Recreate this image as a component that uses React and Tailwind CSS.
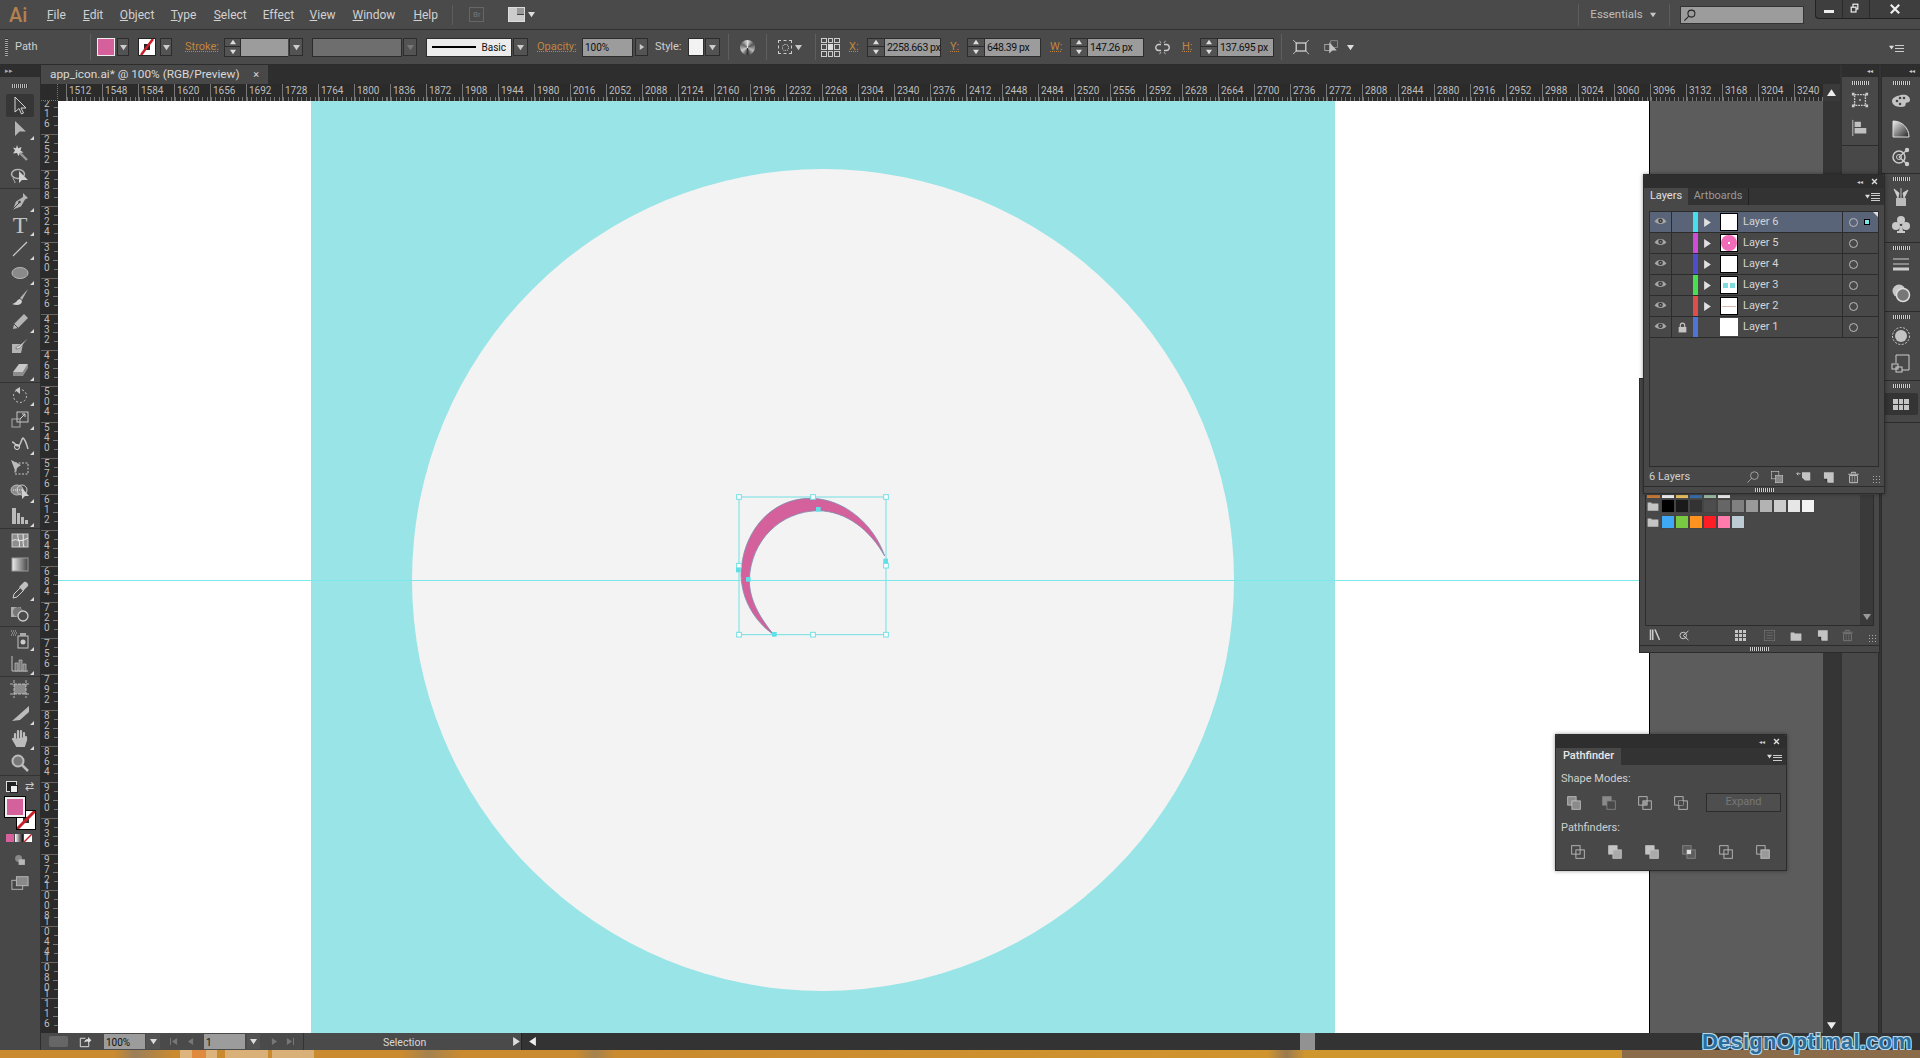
import React from 'react';

const GRAY = '#b4b4b4';
const FONT = 'font-[Roboto,"Liberation_Sans",sans-serif]';

const Caret = ({ color = '#c8c8c8', dir = 'down', size = 7 }) => {
    const d = { down: 'M0 1h8L4 7z', up: 'M0 7h8L4 1z', right: 'M1 0v8l6-4z', left: 'M7 0v8L1 4z' }[dir];
    return <svg width={size} height={size} viewBox="0 0 8 8"><path d={d} fill={color} /></svg>;
};

const Svg = ({ size = 20, children, box = '0 0 20 20' }) => (
    <svg width={size} height={size} viewBox={box} fill="none">{children}</svg>
);

// ── Tool icons ────────────────────────────────────────────────────────────────
const toolIcons = {
    select: <path d="M5 1v15l4-3.5 2.5 5.5 2-1-2.5-5h5z" fill="#3a3a3a" stroke="#d4d4d4" />,
    direct: <path d="M5 2v15l4.5-4.5H16z" fill={GRAY} />,
    wand: <><path d="M7 2l1.2 3.2L11.5 4l-1 3.5 3 2-3.5.5L8.5 13 7 10l-4 .5 2-3-2-3 3 .7z" fill="#d0d0d0" /><path d="M10 10l7 7" stroke="#999" strokeWidth="2.4" /></>,
    lasso: <><ellipse cx="8" cy="8" rx="6.5" ry="4.5" stroke={GRAY} strokeWidth="1.5" /><path d="M3 12c0 2 2 2 2 5" stroke={GRAY} /><path d="M9 5v12l3-3h6z" fill="#d0d0d0" /></>,
    pen: <><path d="M13 2l5 5-3 1.500-4 7-8 3 3-8 7-4.500z" fill={GRAY} /><path d="M3 18l6-6" stroke="#444" /><circle cx="9.500" cy="11" r="1.300" fill="#444" /></>,
    line: <path d="M3 17L17 3" stroke="#c8c8c8" strokeWidth="1.200" />,
    ellipse: <ellipse cx="10" cy="10" rx="8" ry="5.500" fill="#8a8a8a" stroke="#b8b8b8" />,
    brush: <><path d="M18 1l-8 9 2 2z" fill={GRAY} /><path d="M10 11c-3 0-3 4-8 5 5 2 10 1 10-3z" fill="#d0d0d0" /></>,
    pencil: <><path d="M14 2l4 4-10 10-5 1 1-5z" fill={GRAY} /><path d="M4 12l4 4" stroke="#444" /></>,
    blob: <><path d="M2 8h11l-2 9H2z" fill={GRAY} /><path d="M18 2L9 10c-2 0-3 1-3 3 3 0 4-1 5-2z" fill="#d8d8d8" stroke="#444" strokeWidth=".5" /></>,
    eraser: <><path d="M9 4h9l-5 8H3z" fill="#c8c8c8" /><path d="M3 12h10v4H3zM13 12l5-8v4l-5 8z" fill="#8c8c8c" /></>,
    rotate: <><circle cx="10" cy="11" r="6.500" stroke="#c0c0c0" strokeDasharray="2 2" /><path d="M10 2v7L5 5z" fill="#c8c8c8" /></>,
    scale: <><rect x="2" y="10" width="8" height="8" stroke="#aaa" /><rect x="7" y="3" width="11" height="10" stroke="#c4c4c4" /><path d="M10 10l5-5M12 5h3v3" stroke="#d4d4d4" /></>,
    warp: <><path d="M2 9c3 0 3 4 6 4s3-7 5-8c2 1 3 4 5 11" stroke="#c4c4c4" strokeWidth="1.500" /><circle cx="7" cy="14" r="2.500" stroke="#e0e0e0" /></>,
    free: <><rect x="5" y="5" width="13" height="11" stroke="#c8c8c8" strokeDasharray="2 1.500" /><path d="M1 2l10 5-4 3-1 5z" fill="#bcbcbc" /></>,
    shape: <><ellipse cx="7" cy="8" rx="6" ry="5" fill="#8a8a8a" stroke="#bbb" /><ellipse cx="12" cy="8" rx="5" ry="5" stroke="#ccc" /><path d="M3 8h9" stroke="#eee" strokeDasharray="1 1" /><path d="M12 6v11l3-3h4z" fill="#d0d0d0" /></>,
    grid: <><path d="M2 2h4v16H2zM7 7h3v11H7zM11 11h3v7h-3zM15 14h3v4h-3z" fill="#bbb" /></>,
    mesh: <><rect x="2" y="3" width="16" height="13" fill="#8e8e8e" stroke="#ccc" /><path d="M2 10c5-4 6 3 16-3M8 3c-1 5 3 8 1 13M13 3c1 4-1 9 1 13" stroke="#eee" /></>,
    gradient: <><defs><linearGradient id="tg"><stop offset="0" stopColor="#eee" /><stop offset="1" stopColor="#444" /></linearGradient></defs><rect x="2" y="3" width="16" height="13" fill="url(#tg)" stroke="#999" /></>,
    dropper: <><path d="M3 18l1-4 7-7 3 3-7 7z" stroke="#d0d0d0" /><path d="M10 6l4-4c2-1 5 2 4 4l-4 4-1 1-4-4z" fill="#c0c0c0" /></>,
    blend: <><rect x="1" y="3" width="10" height="10" fill="#aaa" /><circle cx="8" cy="8" r="5" fill="#777" /><circle cx="13" cy="12" r="5" fill="#4a4a4a" stroke="#ccc" strokeWidth="1.300" /></>,
    symbol: <><rect x="8" y="7" width="10" height="12" stroke="#c4c4c4" /><rect x="10" y="4" width="6" height="3" fill="#aaa" /><circle cx="13" cy="13" r="2.500" fill="#ccc" /><path d="M1 2h6M2 4h5M1 6h6" stroke="#bbb" strokeDasharray="1 1" /></>,
    graph: <><path d="M2 2v15h16" stroke="#c0c0c0" /><path d="M5 9h3v8H5zM9 6h3v11H9zM13 10h3v7h-3z" fill="#777" stroke="#c0c0c0" strokeWidth=".7" /></>,
    artboard: <><rect x="4" y="5" width="12" height="10" fill="#8a8a8a" /><path d="M4 1v18M16 1v18M0 5h20M0 15h20" stroke="#d0d0d0" strokeDasharray="3 1" strokeWidth=".8" /></>,
    slice: <path d="M19 2L2 17l8-1 9-8z" fill="#bcbcbc" />,
    hand: <path d="M5 12V6M8 10V3M11 10V3M14 10V5M3 11l4 7h7l2-6V9" stroke="#bcbcbc" strokeWidth="2.200" strokeLinecap="round" fill="#bcbcbc" />,
    zoom: <><circle cx="8" cy="8" r="5.500" fill="#777" stroke="#bcbcbc" strokeWidth="2" /><path d="M12 12l6 6" stroke="#bcbcbc" strokeWidth="2.500" /></>,
};

const ToolGroup = ({ h, items }) => (
    <div className={`${h} flex flex-col border-b border-[#343434]`}>
        {items.map(([name, corner]) => (
            <div key={name} className="relative flex-1 flex items-center justify-center">
                {name === 'type'
                    ? <span className="font-['Liberation_Serif',serif] text-[24px] leading-none text-[#c4c4c4]">T</span>
                    : <Svg>{toolIcons[name]}</Svg>}
                {corner && <span className="absolute right-[6px] bottom-[1px] w-0 h-0 border-l-[4px] border-l-transparent border-b-[4px] border-b-[#d8d8d8]" />}
            </div>
        ))}
    </div>
);

const Toolbar = () => (
    <div className="w-[41px] shrink-0 flex flex-col bg-[#484848] border-r border-[#2c2c2c]">
        <div className="h-[12px] bg-[#2e2e2e] flex items-center pl-[5px]">
            <span className="text-[7px] leading-none text-[#aaa]">▸▸</span>
        </div>
        <div className="h-[17px] flex items-center justify-center">
            <span className="w-[16px] h-[4px] bg-[repeating-linear-gradient(90deg,#bbb_0_1px,#333_1px_2px)]" />
        </div>
        <div className="mx-[6px] h-[23px] bg-[#363636] rounded-[2px] flex items-center justify-center">
            <Svg>{toolIcons.select}</Svg>
        </div>
        <ToolGroup h="h-[72px]" items={[['direct', 1], ['wand'], ['lasso']]} />
        <ToolGroup h="h-[194px]" items={[['pen', 1], ['type', 1], ['line', 1], ['ellipse', 1], ['brush'], ['pencil', 1], ['blob'], ['eraser', 1]]} />
        <ToolGroup h="h-[146px]" items={[['rotate', 1], ['scale', 1], ['warp', 1], ['free'], ['shape', 1], ['grid', 1]]} />
        <ToolGroup h="h-[98px]" items={[['mesh'], ['gradient'], ['dropper', 1], ['blend']]} />
        <ToolGroup h="h-[50px]" items={[['symbol', 1], ['graph', 1]]} />
        <ToolGroup h="h-[99px]" items={[['artboard'], ['slice', 1], ['hand', 1], ['zoom']]} />
        <div className="mt-[3px] h-[14px] flex items-center justify-between px-[6px]">
            <span className="relative w-[11px] h-[11px] bg-[#222] border border-[#ddd]"><span className="absolute left-[3px] top-[3px] w-[8px] h-[8px] bg-[#eee] border border-[#222]" /></span>
            <span className="text-[11px] leading-none text-[#ccc]">⇄</span>
        </div>
        <div className="relative mt-[4px] h-[34px] mx-[5px]">
            <span className="absolute left-[11px] top-[13px] w-[20px] h-[20px] bg-white border border-black overflow-hidden">
                <svg width="18" height="18" viewBox="0 0 18 18"><rect x="6" y="6" width="6" height="6" fill="#333" /><path d="M0 18L18 0" stroke="#c8202a" strokeWidth="3" /></svg>
            </span>
            <span className="absolute left-0 top-0 w-[20px] h-[20px] bg-[#d5619c] border-2 border-[#eee] outline outline-black" />
        </div>
        <div className="mt-[3px] ml-[6px] flex gap-px">
            <span className="w-[8px] h-[8px] bg-[#d5619c]" />
            <span className="w-[8px] h-[8px] bg-[linear-gradient(90deg,#fff,#111)]" />
            <span className="w-[8px] h-[8px] bg-white overflow-hidden"><svg width="8" height="8" viewBox="0 0 8 8"><path d="M0 8L8 0" stroke="#c8202a" strokeWidth="1.500" /></svg></span>
        </div>
        <div className="mt-[11px] flex justify-center">
            <Svg size={14}><circle cx="8" cy="8" r="5" fill="#888" /><rect x="8" y="9" width="9" height="8" fill="#b8b8b8" /></Svg>
        </div>
        <div className="mt-[7px] flex justify-center">
            <Svg size={18}><rect x="1" y="7" width="12" height="10" stroke="#bbb" /><rect x="6" y="3" width="13" height="10" fill="#8a8a8a" stroke="#bbb" /></Svg>
        </div>
    </div>
);

// ── Menu bar ──────────────────────────────────────────────────────────────────
const menus = [
    ['', 'F', 'ile', 'w-[36px]'], ['', 'E', 'dit', 'w-[37px]'], ['', 'O', 'bject', 'w-[51px]'], ['', 'T', 'ype', 'w-[43px]'],
    ['', 'S', 'elect', 'w-[49px]'], ['Effe', 'c', 't', 'w-[47px]'], ['', 'V', 'iew', 'w-[43px]'], ['', 'W', 'indow', 'w-[61px]'], ['', 'H', 'elp', 'w-[39px]'],
];

const MenuBar = () => (
    <div className="h-[30px] shrink-0 flex items-center bg-[#4a4a4a] border-b border-[#2f2f2f] text-[12px] text-[#d2d2d2]">
        <span className="ml-[9px] w-[38px] text-[20px] font-medium text-[#b5814f] leading-none">Ai</span>
        {menus.map(([pre, u, post, w]) => (
            <span key={u} className={w}>{pre}<span className="underline">{u}</span>{post}</span>
        ))}
        <span className="w-px h-[20px] bg-[#5c5c5c]" />
        <span className="ml-[16px] w-[15px] h-[15px] border border-[#666] text-[8px] leading-[13px] text-center text-[#777]">Br</span>
        <span className="ml-[24px] w-[17px] h-[15px] bg-[#444] border border-[#ddd] flex">
            <span className="w-[8px] bg-[#ccc]" />
            <span className="flex-1 flex flex-col gap-px"><span className="flex-1 bg-[#999]" /><span className="flex-1 bg-[#ccc]" /></span>
        </span>
        <span className="ml-[3px]"><Caret color="#ddd" /></span>
        <span className="ml-[1043px] w-px h-[22px] bg-[#5c5c5c]" />
        <span className="ml-[11px] w-[50px] text-[11.5px] text-[#bdbdbd]">Essentials</span>
        <span className="ml-[10px]"><Caret size={6} /></span>
        <span className="ml-[13px] w-px h-[22px] bg-[#5c5c5c]" />
        <span className="ml-[10px] w-[124px] h-[18px] bg-[#9c9c9c] border border-[#333] flex items-center pl-[2px]">
            <Svg size={14}><circle cx="12" cy="8" r="5" stroke="#222" strokeWidth="1.500" /><path d="M8 12l-6 6" stroke="#222" strokeWidth="1.500" /></Svg>
        </span>
        <div className="ml-[11px] self-start w-[105px] h-[19px] flex bg-[#3e3e3e] border-l border-b border-[#222] rounded-bl-[4px]">
            <span className="w-[27px] flex items-center justify-center border-r border-[#2a2a2a]"><span className="mt-[5px] w-[10px] h-[3px] bg-[#eee]" /></span>
            <span className="w-[27px] flex items-center justify-center border-r border-[#2a2a2a]"><Svg size={12}><rect x="5" y="2" width="8" height="8" stroke="#eee" strokeWidth="2" /><rect x="2" y="7" width="8" height="8" fill="#3e3e3e" stroke="#eee" strokeWidth="2" /></Svg></span>
            <span className="flex-1 flex items-center justify-center"><Svg size={12}><path d="M3 3l14 14M17 3L3 17" stroke="#eee" strokeWidth="3.500" /></Svg></span>
        </div>
    </div>
);

// ── Control bar ───────────────────────────────────────────────────────────────
const Drop = ({ w, ml = '', dim }) => (
    <span className={`${w} ${ml} h-[18px] shrink-0 flex items-center justify-center bg-[#535353] border border-[#2c2c2c]`}>
        <Caret color={dim ? '#777' : '#ccc'} />
    </span>
);

const Sep = ({ ml }) => <span className={`${ml} w-px h-[26px] bg-[#5e5e5e] shrink-0`} />;

const Spinner = ({ ml, w = 'w-[18px]' }) => (
    <span className={`${ml} ${w} h-[19px] shrink-0 flex flex-col items-center justify-around bg-[#535353] border border-[#2c2c2c]`}>
        <Caret dir="up" size={6} color="#ddd" />
        <span className="w-full h-px bg-[#2c2c2c]" />
        <Caret size={6} color="#ddd" />
    </span>
);

const Value = ({ v }) => (
    <span className="w-[56px] h-[19px] shrink-0 bg-[#9c9c9c] border border-[#2c2c2c] border-l-0 pl-[2px] text-[10.5px] leading-[17px] text-[#111] tracking-[-0.4px] whitespace-nowrap">{v}</span>
);

const Label = ({ w, ml, children }) => (
    <span className={`${w} ${ml} shrink-0 text-[#c2853f] underline decoration-dotted text-[11px]`}>{children}</span>
);

const ControlBar = () => (
    <div className="h-[35px] shrink-0 flex items-center bg-[#4a4a4a] border-b border-[#2c2c2c] text-[11px] text-[#cfcfcf]">
        <span className="ml-[5px] w-[3px] h-[18px] bg-[repeating-linear-gradient(0deg,#aaa_0_1px,#333_1px_2px)] shrink-0" />
        <span className="ml-[7px] w-[19px] shrink-0">Path</span>
        <Sep ml="ml-[56px]" />
        <span className="ml-[6px] w-[18px] h-[18px] shrink-0 bg-[#d5619c] border border-[#eee]" />
        <Drop w="w-[12px]" ml="ml-[2px]" />
        <span className="ml-[9px] w-[18px] h-[18px] shrink-0 bg-white border border-[#222] overflow-hidden">
            <svg width="16" height="16" viewBox="0 0 16 16"><rect x="5" y="5" width="6" height="6" fill="#222" /><path d="M2 16L14 0" stroke="#c8202a" strokeWidth="2.500" /></svg>
        </span>
        <Drop w="w-[12px]" ml="ml-[4px]" />
        <Label w="w-[31px]" ml="ml-[13px]">Stroke:</Label>
        <Spinner ml="ml-[8px]" w="w-[17px]" />
        <span className="w-[47px] h-[19px] shrink-0 bg-[#9c9c9c] border-y border-[#2c2c2c]" />
        <Drop w="w-[14px]" ml="ml-px" />
        <span className="ml-[9px] w-[90px] h-[19px] shrink-0 bg-[#6e6e6e] border border-[#2c2c2c]" />
        <Drop w="w-[14px]" ml="ml-px" dim />
        <span className="ml-[9px] w-[86px] h-[19px] shrink-0 bg-[#ececec] border border-[#2c2c2c] flex items-center px-[5px] text-[#111] text-[10px]">
            <span className="w-[45px] h-[2px] bg-black mr-[6px]" />Basic
        </span>
        <Drop w="w-[15px]" ml="ml-px" />
        <Label w="w-[37px]" ml="ml-[9px]">Opacity:</Label>
        <span className="ml-[8px] w-[51px] h-[19px] shrink-0 bg-[#9c9c9c] border border-[#2c2c2c] pl-[2px] text-[10px] leading-[17px] text-[#111]">100%</span>
        <span className="ml-[2px] w-[13px] h-[18px] shrink-0 flex items-center justify-center bg-[#535353] border border-[#2c2c2c]"><Caret dir="right" size={6} /></span>
        <span className="ml-[7px] w-[24px] shrink-0">Style:</span>
        <span className="ml-[9px] w-[16px] h-[18px] shrink-0 bg-[#f2f2f2] border border-[#2c2c2c]" />
        <Drop w="w-[15px]" ml="ml-px" />
        <Sep ml="ml-[8px]" />
        <span className="ml-[11px] w-[15px] h-[15px] shrink-0 rounded-full bg-[conic-gradient(#ddd,#555,#bbb,#333,#ccc,#666,#ddd)]" />
        <Sep ml="ml-[11px]" />
        <span className="ml-[11px] w-[14px] h-[14px] shrink-0 border border-dashed border-[#ccc] flex items-center justify-center"><span className="w-[7px] h-[7px] rounded-full border border-dotted border-[#ccc]" /></span>
        <span className="ml-[3px] shrink-0"><Caret /></span>
        <Sep ml="ml-[13px]" />
        <span className="ml-[5px] w-[19px] h-[19px] shrink-0 grid grid-cols-3 gap-px">
            {[0, 1, 2, 3, 4, 5, 6, 7, 8].map((i) => <span key={i} className={i === 4 ? 'bg-[#ddd]' : 'border border-[#ccc]'} />)}
        </span>
        <Label w="w-[11px]" ml="ml-[9px]">X:</Label>
        <Spinner ml="ml-[7px]" />
        <Value v="2258.663 px" />
        <Label w="w-[10px]" ml="ml-[9px]">Y:</Label>
        <Spinner ml="ml-[7px]" />
        <Value v="648.39 px" />
        <Label w="w-[13px]" ml="ml-[9px]">W:</Label>
        <Spinner ml="ml-[7px]" />
        <Value v="147.26 px" />
        <span className="ml-[11px] w-[15px] shrink-0 flex">
            <Svg size={15}><path d="M8 6H5a4 4 0 000 8h3M12 6h3a4 4 0 010 8h-3" stroke="#ccc" strokeWidth="1.800" /><path d="M6 1l2 3M14 1l-2 3M6 19l2-3M14 19l-2-3" stroke="#ccc" /></Svg>
        </span>
        <Label w="w-[10px]" ml="ml-[12px]">H:</Label>
        <Spinner ml="ml-[8px]" />
        <Value v="137.695 px" />
        <Sep ml="ml-[7px]" />
        <span className="ml-[11px] w-[16px] shrink-0 flex">
            <Svg size={16}><rect x="4" y="5" width="12" height="10" stroke="#ddd" strokeWidth="1.500" /><path d="M0 1l4 4M20 1l-4 4M0 19l4-4M20 19l-4-4" stroke="#ddd" /></Svg>
        </span>
        <span className="ml-[15px] w-[15px] shrink-0 flex">
            <Svg size={15}><rect x="1" y="6" width="8" height="8" stroke="#bbb" /><rect x="9" y="1" width="9" height="9" stroke="#999" /><path d="M7 3v15l4-4h6z" fill="#c4c4c4" /></Svg>
        </span>
        <span className="ml-[8px] shrink-0"><Caret color="#ddd" /></span>
        <span className="ml-auto mr-[16px] shrink-0 flex items-center gap-px">
            <Caret size={5} color="#ddd" />
            <span className="w-[9px] h-[9px] bg-[repeating-linear-gradient(0deg,#ccc_0_1px,transparent_1px_3px)]" />
        </span>
    </div>
);

// ── Rulers ────────────────────────────────────────────────────────────────────
const hMarks = [];
for (let n = 1512; n <= 3240; n += 36) hMarks.push(n);
const vMarks = [];
for (let n = 216; n <= 1116; n += 36) vMarks.push(n);

const HRuler = () => (
    <div className="h-[17px] shrink-0 flex bg-[#2b2b2b] text-[10px] text-[#bdbdbd]">
        <span className="w-[17px] shrink-0 border-r border-b border-dotted border-[#777]" />
        <div className="flex-1 flex pl-[8px] overflow-hidden">
            {hMarks.map((n) => (
                <div key={n} className="relative w-[36px] shrink-0 border-l border-[#777] pl-[2px] leading-[13px] overflow-visible">
                    {n}
                    <span className="absolute left-0 right-0 bottom-0 h-[4px] bg-[repeating-linear-gradient(90deg,#777_0_1px,transparent_1px_4.500px)]" />
                </div>
            ))}
        </div>
        <div className="w-[17px] shrink-0 bg-[#3a3a3a] flex items-center justify-center"><Caret dir="up" color="#eee" size={9} /></div>
    </div>
);

const VRuler = () => (
    <div className="w-[17px] shrink-0 bg-[#2b2b2b] overflow-hidden text-[10px] leading-[10px] text-[#bdbdbd] relative">
        <div className="-mt-[3px]">
            {vMarks.map((n) => (
                <div key={n} className="relative h-[36px] border-t border-[#666] pl-[3px]">
                    <div className={n >= 1000 ? '-mt-[10px] flex flex-col' : 'flex flex-col'}>
                        {String(n).split('').map((d, i) => <span key={i}>{d}</span>)}
                    </div>
                    <span className="absolute right-0 top-[8px] w-[4px] h-px bg-[#777]" />
                    <span className="absolute right-0 top-[17px] w-[5px] h-px bg-[#777]" />
                    <span className="absolute right-0 top-[26px] w-[4px] h-px bg-[#777]" />
                </div>
            ))}
        </div>
    </div>
);

// ── Artboard with selected crescent ───────────────────────────────────────────
const Handle = ({ x, y, filled }) => (
    filled
        ? <rect x={x - 7} y={y - 7} width="14" height="14" fill="#5ee0e6" />
        : <rect x={x - 7} y={y - 7} width="14" height="14" fill="#fff" stroke="#72dfe4" strokeWidth="3" />
);

const Crescent = () => (
    <svg className="absolute left-[662px] top-[379px]" width="180" height="170" viewBox="0 0 540 510" fill="none">
        <path d="M494 228C460 130 370 55 270 55C150 55 65 160 63 285C65 360 105 425 160 463C118 410 88 360 88 298C93 182 180 94 295 92C380 94 450 150 494 228Z" fill="#d5619c" stroke="#7e8fb0" strokeWidth="2.500" />
        <rect x="57" y="51" width="441" height="413" stroke="#72dfe4" strokeWidth="3" />
        <Handle x={57} y={51} /><Handle x={279} y={51} /><Handle x={498} y={51} />
        <Handle x={57} y={257} /><Handle x={498} y={257} />
        <Handle x={57} y={464} /><Handle x={279} y={464} /><Handle x={498} y={464} />
        <Handle x={295} y={88} filled /><Handle x={85} y={298} filled /><Handle x={55} y={270} filled /><Handle x={497} y={243} filled /><Handle x={163} y={463} filled />
    </svg>
);

const Canvas = () => (
    <div className="relative flex-1 flex overflow-hidden">
        <div className="w-[253px] shrink-0 bg-white" />
        <div className="w-[1024px] shrink-0 bg-[#98e4e7]" />
        <div className="w-[315px] shrink-0 bg-white border-r border-black" />
        <div className="flex-1 bg-[#5c5c5c]" />
        <div className="absolute left-[354px] top-[68px] w-[822px] h-[822px] rounded-full bg-[#f3f3f3]" />
        <div className="absolute left-0 top-[479px] w-[1582px] h-px bg-[#7de8ea]" />
        <Crescent />
    </div>
);

// ── Right dock ────────────────────────────────────────────────────────────────
const Grip = () => <span className="block mx-auto w-[17px] h-[4px] bg-[repeating-linear-gradient(90deg,#ccc_0_1px,#333_1px_2px)]" />;

const DockIcon = ({ children, h }) => <div className={`${h} flex items-center justify-center`}>{children}</div>;

const DockHead = () => (
    <div className="h-[12px] bg-[#2e2e2e] flex items-center justify-end pr-[5px]"><span className="text-[6px] leading-none text-[#ccc]">◂◂</span></div>
);

const Dock = () => (
    <div className="w-[80px] shrink-0 flex pl-[2px] gap-[2px] bg-[#333]">
        <div className="w-[37px] flex flex-col bg-[#484848] border-r border-[#2c2c2c]">
            <DockHead />
            <div className="pt-[4px] pb-[4px] border-b border-[#2c2c2c]">
                <Grip />
                <DockIcon h="h-[30px]"><Svg size={18}><rect x="4" y="4" width="12" height="12" stroke="#ccc" strokeDasharray="2 1" strokeWidth="1.500" /><circle cx="10" cy="10" r="1" fill="#ccc" /><path d="M1 2h3v3H1zM16 2h3v3h-3zM1 15h3v3H1zM16 15h3v3h-3z" fill="#ccc" /></Svg></DockIcon>
                <DockIcon h="h-[26px]"><Svg size={18}><path d="M2 1v18" stroke="#ccc" /><path d="M4 3h7v6H4zM4 10h13v6H4z" fill="#c0c0c0" /></Svg></DockIcon>
            </div>
        </div>
        <div className="w-[39px] flex flex-col bg-[#484848] border-l border-[#2c2c2c]">
            <DockHead />
            <div className="pt-[4px] border-b border-[#2c2c2c]">
                <Grip />
                <DockIcon h="h-[32px]"><Svg size={20}><path d="M10 4c5-1 9 1 9 5 0 3-3 2-4 3s1 4-5 4-9-3-9-6 4-5 9-6z" fill="#c4c4c4" /><circle cx="6" cy="10" r="1.300" fill="#444" /><circle cx="9" cy="7" r="1.300" fill="#444" /><circle cx="13" cy="7" r="1.300" fill="#444" /><circle cx="9" cy="13" r="1.300" fill="#444" /></Svg></DockIcon>
                <DockIcon h="h-[24px]"><Svg size={20}><defs><linearGradient id="dg" x1="0" y1="0" x2="1" y2="1"><stop offset="0" stopColor="#eee" /><stop offset="1" stopColor="#222" /></linearGradient></defs><path d="M2 2c9 0 16 7 16 16H2z" fill="url(#dg)" stroke="#ddd" /></Svg></DockIcon>
                <DockIcon h="h-[32px]"><Svg size={20}><circle cx="8" cy="10" r="6" stroke="#ccc" strokeWidth="1.500" /><circle cx="8" cy="10" r="2.500" stroke="#ccc" /><path d="M8 10l8-7M8 10l8 7" stroke="#ccc" strokeWidth="1.300" /><circle cx="16" cy="3" r="2.200" fill="#ccc" /><circle cx="16" cy="17" r="2.200" fill="#ccc" /></Svg></DockIcon>
            </div>
            <div className="pt-[3px] h-[69px] border-b border-[#2c2c2c]">
                <Grip />
                <DockIcon h="h-[32px]"><Svg size={20}><path d="M5 11h10v8H5z" fill="#bbb" /><path d="M7 11L3 2l5 4zM10 11V1M13 11l4-8-5 3z" stroke="#d0d0d0" fill="#d0d0d0" strokeWidth=".8" /></Svg></DockIcon>
                <DockIcon h="h-[24px]"><Svg size={20}><circle cx="10" cy="5" r="4" fill="#c8c8c8" /><circle cx="5" cy="11" r="4" fill="#c8c8c8" /><circle cx="15" cy="11" r="4" fill="#c8c8c8" /><path d="M9 11h2l1 5h2v2H6v-2h2z" fill="#c8c8c8" /></Svg></DockIcon>
            </div>
            <div className="pt-[3px] h-[69px] border-b border-[#2c2c2c]">
                <Grip />
                <DockIcon h="h-[30px]"><Svg size={20}><path d="M2 4h16M2 9h16" stroke="#ccc" /><path d="M2 14h16" stroke="#ccc" strokeWidth="3" /></Svg></DockIcon>
                <DockIcon h="h-[26px]"><Svg size={20}><circle cx="8" cy="8" r="6.500" fill="#c8c8c8" /><circle cx="12" cy="12" r="6.500" fill="#777" stroke="#ddd" strokeWidth="1.500" /></Svg></DockIcon>
            </div>
            <div className="pt-[3px] h-[69px] border-b border-[#2c2c2c]">
                <Grip />
                <DockIcon h="h-[34px]"><Svg size={20}><circle cx="10" cy="10" r="8.500" stroke="#ccc" strokeDasharray="2 1.500" /><circle cx="10" cy="10" r="6" fill="#c4c4c4" /></Svg></DockIcon>
                <DockIcon h="h-[20px]"><Svg size={20}><path d="M5 10V2h13v15h-7" stroke="#ccc" /><rect x="1" y="11" width="6" height="5" stroke="#ccc" /><rect x="5" y="14" width="6" height="5" stroke="#ccc" /></Svg></DockIcon>
            </div>
            <div className="pt-[3px] h-[42px] border-b border-[#2c2c2c]">
                <Grip />
                <div className="mt-[5px] mx-[2px] h-[22px] bg-[#343434] rounded-[2px] flex items-center justify-center">
                    <span className="w-[16px] h-[11px] grid grid-cols-3 gap-px bg-[#343434]">
                        {[0, 1, 2, 3, 4, 5].map((i) => <span key={i} className="bg-[#c4c4c4]" />)}
                    </span>
                </div>
            </div>
        </div>
    </div>
);

// ── Floating panels ───────────────────────────────────────────────────────────
const PanelMenu = () => (
    <span className="flex items-center gap-px">
        <Caret size={5} color="#ddd" />
        <span className="w-[9px] h-[8px] bg-[repeating-linear-gradient(0deg,#ccc_0_1px,transparent_1px_2.500px)]" />
    </span>
);

const PanelHead = () => (
    <div className="h-[13px] flex items-center justify-end gap-[8px] pr-[6px] bg-[#2e2e2e] rounded-t-[2px] text-[#ccc]">
        <span className="text-[6px] leading-none">◂◂</span>
        <Svg size={7}><path d="M3 3l14 14M17 3L3 17" stroke="#ddd" strokeWidth="4" /></Svg>
    </div>
);

const Resize = () => <span className="w-[9px] h-[9px] bg-[radial-gradient(#aaa_30%,transparent_35%)] bg-size-[3px_3px]" />;

const PageIcon = ({ dim }) => (
    <Svg size={13}><path d="M3 2h15v16H9l-6-6z" fill={dim ? '#777' : '#c4c4c4'} /><path d="M2 12h6v6" fill="#333" /></Svg>
);

const TrashIcon = ({ dim }) => {
    const c = dim ? '#777' : '#c4c4c4';
    return <Svg size={13}><path d="M2 5h16M7 4V2h6v2" stroke={c} strokeWidth="1.500" /><path d="M4 7h12v11H4z" stroke={c} strokeWidth="1.500" /><path d="M8 8v9M12 8v9" stroke={c} /></Svg>;
};

const layers = [
    { name: 'Layer 6', color: 'bg-[#46e0ea]', open: true, selected: true },
    { name: 'Layer 5', color: 'bg-[#d04cd8]', open: true, thumb: 'pink' },
    { name: 'Layer 4', color: 'bg-[#4f4cd0]', open: true },
    { name: 'Layer 3', color: 'bg-[#46e050]', open: true, thumb: 'cyan' },
    { name: 'Layer 2', color: 'bg-[#e04c4c]', open: true, thumb: 'line' },
    { name: 'Layer 1', color: 'bg-[#4f74d8]', locked: true },
];

const Thumb = ({ kind, plain }) => (
    <span className={`w-[18px] h-[18px] shrink-0 bg-white flex items-center justify-center gap-[2px] ${plain ? '' : 'border border-black'}`}>
        {kind === 'pink' && <span className="w-[16px] h-[16px] rounded-full bg-[#f06cb8] flex items-center justify-center"><span className="w-[2px] h-[2px] bg-white" /></span>}
        {kind === 'cyan' && <><span className="w-[5px] h-[5px] bg-[#7fdcdc]" /><span className="w-[5px] h-[5px] bg-[#7fdcdc]" /></>}
        {kind === 'line' && <span className="w-[14px] h-px bg-[#d8b8a8]" />}
    </span>
);

const LayerRow = ({ layer }) => (
    <div className={`relative h-[21px] flex items-center border-b border-[#2c2c2c] ${layer.selected ? 'bg-[#5a6478]' : ''}`}>
        <span className="w-[22px] h-full shrink-0 flex items-center justify-center border-r border-[#2c2c2c]">
            <span className="-mt-[2px] flex"><Svg size={13}><path d="M1 10c4-7 14-7 18 0-4 5-14 5-18 0z" fill="#a8a8a8" /><circle cx="10" cy="9" r="3.500" fill="#3a3a3a" /><circle cx="10" cy="9" r="1.300" fill="#888" /></Svg></span>
        </span>
        <span className="w-[21px] h-full shrink-0 flex items-center justify-center">
            {layer.locked && <Svg size={11}><path d="M6 9V6a4 4 0 018 0v3" stroke="#c4c4c4" strokeWidth="2" /><rect x="3" y="9" width="14" height="10" fill="#c4c4c4" /></Svg>}
        </span>
        <span className={`w-[5px] h-[20px] shrink-0 ${layer.color}`} />
        <span className="ml-[5px] w-[17px] shrink-0 flex">{layer.open && <Caret dir="right" color="#e0e0e0" size={9} />}</span>
        <Thumb kind={layer.thumb} plain={layer.locked} />
        <span className="ml-[5px] flex-1 text-[11px] text-[#d4d4d4]">{layer.name}</span>
        <span className="w-[36px] h-full shrink-0 flex items-center pl-[6px] gap-[6px] border-l border-[#2c2c2c]">
            <span className="w-[9px] h-[9px] rounded-full border border-[#bbb]" />
            {layer.selected && <span className="w-[6px] h-[6px] bg-[#7de8ea] border border-black" />}
        </span>
        {layer.selected && <span className="absolute right-0 top-0 w-0 h-0 border-l-[5px] border-l-transparent border-t-[5px] border-t-[#ddd]" />}
    </div>
);

const LayersPanel = () => (
    <div className="absolute left-[1643px] top-[174px] w-[242px] h-[320px] flex flex-col bg-[#484848] border border-[#2c2c2c] shadow-[0_0_4px_rgba(0,0,0,0.4)]">
        <PanelHead />
        <div className="h-[17px] flex items-stretch bg-[#333] text-[11px] pr-[4px]">
            <span className="w-[44px] bg-[#484848] text-[#e0e0e0] flex items-center justify-center">Layers</span>
            <span className="w-[61px] flex items-center justify-center text-[#999] border-r border-[#222]">Artboards</span>
            <span className="ml-auto flex items-center"><PanelMenu /></span>
        </div>
        <div className="mx-[5px] mt-[6px] h-[256px] border border-[#2c2c2c]">
            {layers.map((l) => <LayerRow key={l.name} layer={l} />)}
        </div>
        <div className="flex-1 flex items-center pl-[5px] pt-[1px] text-[11px] text-[#d0d0d0] relative">
            <span>6 Layers</span>
            <span className="ml-[56px] flex"><Svg size={14}><circle cx="12" cy="8" r="5.500" stroke="#c4c4c4" /><path d="M8 12l-6 6" stroke="#c4c4c4" /></Svg></span>
            <span className="ml-[11px] flex"><Svg size={13}><rect x="1" y="1" width="11" height="11" stroke="#c4c4c4" /><rect x="7" y="7" width="11" height="11" fill="#888" stroke="#c4c4c4" /></Svg></span>
            <span className="ml-[12px] flex"><Svg size={15}><path d="M1 5h5M3 3l-2 2 2 2" stroke="#ddd" /><path d="M8 3h11v11h-7l-4-4z" fill="#c4c4c4" /></Svg></span>
            <span className="ml-[11px] flex"><PageIcon /></span>
            <span className="ml-[12px] flex"><TrashIcon /></span>
            <span className="absolute right-[3px] bottom-[2px] flex"><Resize /></span>
        </div>
        <div className="h-[7px] border-t border-[#2c2c2c] flex items-center"><span className="block mx-auto w-[19px] h-[4px] bg-[repeating-linear-gradient(90deg,#ccc_0_1px,#333_1px_2px)]" /></div>
    </div>
);

const greys = ['#000000', '#1a1a1a', '#333333', '#4d4d4d', '#666666', '#808080', '#999999', '#b3b3b3', '#cccccc', '#e6e6e6', '#f2f2f2'];
const brights = ['#3fa9f5', '#7ac943', '#ff931e', '#ff1d25', '#ff7bac', '#bdccd4'];

const Folder = () => <Svg size={12}><path d="M1 4h6l1 2h11v12H1z" fill="#c4c4c4" /></Svg>;

const SwatchRow = ({ colors }) => (
    <div className="h-[14px] flex items-center pl-[1px]">
        <span className="w-[14px] flex"><Folder /></span>
        {colors.map((c) => (
            <span key={c} className="w-[14px] h-[14px] border border-[#444]" style={{ background: c }} />
        ))}
    </div>
);

const SwatchesPanel = () => (
    <div className="absolute left-[1639px] top-[378px] w-[241px] h-[275px] flex flex-col bg-[#484848] border border-[#2c2c2c]">
        <div className="mx-[5px] mt-[116px] h-[131px] flex border-x border-b border-[#2c2c2c]">
            <div className="flex-1 flex flex-col">
                <div className="h-[3px] ml-[1px] flex gap-[2px]">
                    <span className="w-[13px] bg-[#c87a3a]" /><span className="w-[12px] bg-[#eee]" /><span className="w-[12px] bg-[#e8c060]" /><span className="w-[12px] bg-[#3a6ea8]" /><span className="w-[12px] bg-[#9ab8a0]" /><span className="w-[12px] bg-[#e8e8e8]" />
                </div>
                <div className="mt-[1px] flex flex-col gap-[2px]">
                    <SwatchRow colors={greys} />
                    <SwatchRow colors={brights} />
                </div>
            </div>
            <div className="w-[13px] bg-[#3a3a3a] flex items-end justify-center pb-[4px]"><Caret color="#999" size={8} /></div>
        </div>
        <div className="relative flex-1 flex items-center pl-[9px]">
            <span className="flex"><Svg size={15}><path d="M2 2v14M5 2v14M8 2l6 14" stroke="#ccc" strokeWidth="2" /></Svg></span>
            <span className="flex ml-[14px]"><Svg size={13}><circle cx="8" cy="10" r="5" stroke="#ccc" strokeWidth="1.500" /><path d="M8 10l8-7M8 10l8 7" stroke="#ccc" strokeWidth="1.500" /></Svg></span>
            <span className="ml-[44px] w-[11px] h-[11px] grid grid-cols-3 gap-px">
                {[0, 1, 2, 3, 4, 5, 6, 7, 8].map((i) => <span key={i} className="bg-[#c4c4c4]" />)}
            </span>
            <span className="ml-[17px] flex"><Svg size={13}><rect x="2" y="2" width="16" height="16" stroke="#777" /><path d="M5 6h10M5 10h10M5 14h10" stroke="#777" /></Svg></span>
            <span className="ml-[14px] flex"><Folder /></span>
            <span className="ml-[14px] flex"><PageIcon /></span>
            <span className="ml-[12px] flex"><TrashIcon dim /></span>
            <span className="absolute right-[2px] bottom-[2px] flex"><Resize /></span>
        </div>
        <div className="h-[7px] border-t border-[#2c2c2c] flex items-center"><span className="block mx-auto w-[19px] h-[4px] bg-[repeating-linear-gradient(90deg,#ccc_0_1px,#333_1px_2px)]" /></div>
    </div>
);

const Combo = ({ back, front, mid, dim }) => (
    <Svg size={14}>
        <rect x="1" y="1" width="12" height="12" fill={back} stroke={dim ? '#888' : '#c4c4c4'} strokeWidth="1.200" />
        <rect x="7" y="7" width="12" height="12" fill={front} stroke={dim ? '#888' : '#c4c4c4'} strokeWidth="1.200" />
        {mid && <rect x="7" y="7" width="6" height="6" fill={mid} />}
    </Svg>
);

const PathfinderPanel = () => (
    <div className="absolute left-[1555px] top-[734px] w-[232px] h-[137px] flex flex-col bg-[#484848] border border-[#2c2c2c] shadow-[0_0_4px_rgba(0,0,0,0.4)] text-[11px] text-[#d0d0d0]">
        <PanelHead />
        <div className="h-[17px] flex items-stretch bg-[#333] pr-[4px]">
            <span className="w-[65px] bg-[#484848] text-[#e8e8e8] font-medium flex items-center justify-center">Pathfinder</span>
            <span className="ml-auto flex items-center"><PanelMenu /></span>
        </div>
        <div className="mt-[7px] pl-[5px] leading-[14px]">Shape Modes:</div>
        <div className="mt-[7px] h-[19px] flex items-center pl-[11px]">
            <Combo back="#8a8a8a" front="#8a8a8a" />
            <span className="ml-[21px] flex"><Combo back="#8a8a8a" front="#484848" dim /></span>
            <span className="ml-[22px] flex"><Combo back="none" front="none" mid="#999" /></span>
            <span className="ml-[22px] flex"><Combo back="none" front="none" mid="#484848" /></span>
            <span className="ml-[18px] w-[75px] h-[19px] border border-[#2c2c2c] bg-[#4e4e4e] text-[#777] flex items-center justify-center">Expand</span>
        </div>
        <div className="mt-[9px] pl-[5px] leading-[14px]">Pathfinders:</div>
        <div className="mt-[10px] flex items-center pl-[15px] gap-[23px]">
            <Combo back="none" front="none" />
            <Combo back="#c4c4c4" front="#aaa" />
            <Combo back="#c4c4c4" front="#aaa" />
            <Combo back="#5c5c5c" front="#5c5c5c" mid="#ddd" dim />
            <Combo back="none" front="none" />
            <Combo back="none" front="#999" />
        </div>
    </div>
);

// ── Status bar ────────────────────────────────────────────────────────────────
const StatusBar = () => (
    <div className="h-[17px] shrink-0 flex items-center bg-[#333] text-[10px] text-[#d8d8d8]">
        <div className="w-[480px] h-full shrink-0 flex items-center bg-[#4a4a4a]">
            <span className="ml-[8px] w-[19px] h-[11px] bg-[#666] rounded-[2px] shrink-0" />
            <span className="ml-[11px] flex shrink-0"><Svg size={13}><path d="M2 5h8M2 5v13h13v-6" stroke="#ddd" strokeWidth="1.500" /><path d="M8 12c0-4 3-6 6-6V3l5 5-5 5v-3c-3 0-5 0-6 2z" fill="#ddd" /></Svg></span>
            <span className="ml-[12px] w-[41px] h-[15px] shrink-0 bg-[#9c9c9c] text-[#111] pl-[2px] leading-[18px]">100%</span>
            <span className="ml-px w-[14px] h-[15px] shrink-0 bg-[#535353] flex items-center justify-center"><Caret color="#ddd" /></span>
            <span className="ml-[10px] w-[9px] shrink-0 flex items-center"><span className="w-px h-[7px] bg-[#777]" /><Caret dir="left" color="#777" size={7} /></span>
            <span className="ml-[8px] shrink-0 flex"><Caret dir="left" color="#777" size={7} /></span>
            <span className="ml-[10px] w-[41px] h-[15px] shrink-0 bg-[#9c9c9c] text-[#111] pl-[2px] leading-[18px]">1</span>
            <span className="ml-[2px] w-[13px] h-[15px] shrink-0 bg-[#535353] flex items-center justify-center"><Caret color="#ddd" /></span>
            <span className="ml-[11px] shrink-0 flex"><Caret dir="right" color="#777" size={7} /></span>
            <span className="ml-[8px] w-[9px] shrink-0 flex items-center"><Caret dir="right" color="#777" size={7} /><span className="w-px h-[7px] bg-[#777]" /></span>
            <span className="ml-[8px] w-px h-full bg-[#333] shrink-0" />
            <span className="ml-[79px] w-[40px] shrink-0 pt-[3px] text-[10.5px]">Selection</span>
            <span className="ml-[89px] shrink-0 flex"><Caret dir="right" color="#ddd" size={9} /></span>
            <span className="ml-auto w-px h-full bg-[#222] shrink-0" />
        </div>
        <span className="ml-[7px] shrink-0 flex"><Caret dir="left" color="#eee" size={9} /></span>
        <span className="ml-[763px] w-[15px] h-full shrink-0 bg-[#929292]" />
    </div>
);

const Taskbar = () => (
    <div className="h-[8px] shrink-0 flex bg-[linear-gradient(90deg,#c98a30_0,#c98a30_6%,#9a7f5a_7%,#c98a30_9%,#c98a30_21%,#a4824f_22.300%,#c98a30_24%,#c98a30_30%,#a4824f_31%,#c98a30_32%,#d0942e_66%,#9a7a50_67%,#d0962e_68%,#d0962e_84.500%,#8a6c4a_84.500%,#8a6c4a_100%)]">
        <span className="ml-[180px] w-[37px] bg-[#dcb47c] flex justify-center"><span className="w-[14px] bg-[#e08a40]" /></span>
        <span className="ml-[8px] w-[43px] bg-[#d8b078]" />
        <span className="ml-[4px] w-[42px] bg-[#d8b078]" />
    </div>
);

export default function App() {
    return (
        <div className={`relative w-[1920px] h-[1058px] flex flex-col overflow-hidden bg-[#484848] ${FONT}`}>
            <MenuBar />
            <ControlBar />
            <div className="flex-1 flex min-h-0">
                <Toolbar />
                <div className="flex-1 flex flex-col min-w-0">
                    <div className="flex-1 flex min-h-0">
                        <div className="flex-1 flex flex-col min-w-0">
                            <div className="h-[19px] shrink-0 flex bg-[#2e2e2e]">
                                <div className="w-[227px] flex items-center justify-between px-[9px] bg-[#484848] text-[11.8px] text-[#d8d8d8]">
                                    <span>app_icon.ai* @ 100% (RGB/Preview)</span>
                                    <span className="text-[11px] leading-none">×</span>
                                </div>
                            </div>
                            <HRuler />
                            <div className="flex-1 flex min-h-0">
                                <VRuler />
                                <Canvas />
                                <div className="w-[17px] shrink-0 bg-[#353535] flex items-end justify-center pb-[3px]"><Caret color="#eee" size={9} /></div>
                            </div>
                        </div>
                        <Dock />
                    </div>
                    <StatusBar />
                </div>
            </div>
            <Taskbar />
            <SwatchesPanel />
            <LayersPanel />
            <PathfinderPanel />
            <span className="absolute left-[1702px] top-[1028px] font-['Liberation_Sans',sans-serif] font-bold text-[22px] leading-[28px] tracking-[0.2px] whitespace-nowrap text-[#2d6d9c] [text-shadow:1px_1px_0_#b5d8ea,-1px_-1px_0_#b5d8ea,1px_-1px_0_#b5d8ea,-1px_1px_0_#b5d8ea]">DesignOptimal.com</span>
        </div>
    );
}
